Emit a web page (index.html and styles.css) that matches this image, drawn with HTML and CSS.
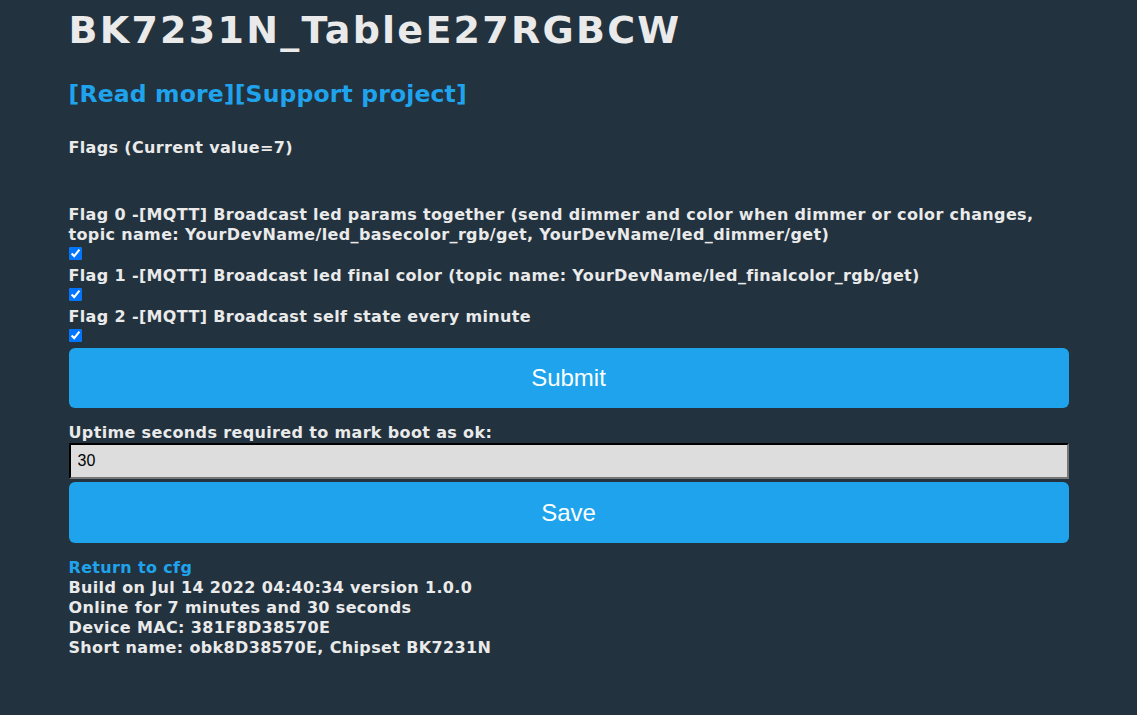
FILE: index.html
```html
<!DOCTYPE html>
<html lang="en">
<head>
  <meta charset="UTF-8">
  <title>BK7231N_TableE27RGBCW</title>
  <link rel="stylesheet" href="styles.css">
</head>
<body>
  <div class="page">
    <h1>BK7231N_TableE27RGBCW</h1>
    <h3 class="top-links"><a href="#">[Read more]</a><a href="#">[Support project]</a></h3>

    <form class="flags">
      <h4 class="flags-title">Flags (Current value=7)</h4>

      <label class="flag">Flag 0 -[MQTT] Broadcast led params together (send dimmer and color when dimmer or color changes, topic name: YourDevName/led_basecolor_rgb/get, YourDevName/led_dimmer/get)</label>
      <input type="checkbox" class="flag-check" checked>
      <label class="flag">Flag 1 -[MQTT] Broadcast led final color (topic name: YourDevName/led_finalcolor_rgb/get)</label>
      <input type="checkbox" class="flag-check" checked>
      <label class="flag">Flag 2 -[MQTT] Broadcast self state every minute</label>
      <input type="checkbox" class="flag-check" checked>

      <button type="button" class="btn">Submit</button>
    </form>

    <form class="uptime">
      <label class="uptime-label">Uptime seconds required to mark boot as ok:</label>
      <input type="text" class="field" value="30">
      <button type="button" class="btn btn-save">Save</button>
    </form>

    <div class="footer">
      <a href="#">Return to cfg</a>
      <div>Build on Jul 14 2022 04:40:34 version 1.0.0</div>
      <div>Online for 7 minutes and 30 seconds</div>
      <div>Device MAC: 381F8D38570E</div>
      <div>Short name: obk8D38570E, Chipset BK7231N</div>
    </div>
  </div>
</body>
</html>
```

FILE: styles.css
```css
/* Dark config page */
body, html {
  margin: 0;
  padding: 0;
  background: #22323f;
  color: #eaeaea;
  font-family: "DejaVu Sans", Verdana, sans-serif;
  font-size: 16px;
  font-weight: bold;
  letter-spacing: 0.35px; /* DejaVu runs a bit narrower than Verdana */
}

a {
  color: #1fa3ec;
  text-decoration: none;
}

.page {
  width: 1000px;
  margin: 0 auto;
}

h1 {
  margin: 6px 0 0;
  font-size: 38px;
  line-height: 48px;
  font-weight: bold;
  letter-spacing: 2.25px;
}

.top-links {
  margin: 25px 0 0;
  font-size: 23.5px;
  line-height: 30px;
  font-weight: bold;
  letter-spacing: 0.15px;
}

.flags-title {
  margin: 29px 0 47px;
  font-size: 16px;
  line-height: 20px;
}

.flag {
  display: block;
  line-height: 20px;
  font-size: 16px;
}

.flag-check {
  display: block;
  width: 13px;
  height: 13px;
  margin: 2px 0 6px;
  accent-color: #0075ff;
}

.btn {
  display: block;
  width: 100%;
  height: 60px;
  border: 0;
  border-radius: 6px;
  background: #1fa3ec;
  color: #faffff;
  font-family: "Liberation Sans", Arial, sans-serif;
  font-size: 24px;
  line-height: 60px;
  letter-spacing: 0;
  padding: 0;
}

.uptime {
  margin-top: 15px;
}

.uptime-label {
  display: block;
  line-height: 20px;
}

.field {
  display: block;
  box-sizing: border-box;
  width: 100%;
  height: 36px;
  margin: 0;
  padding: 0 7px;
  background: #dddddd;
  border: 2px inset #767676;
  border-top-color: #222;
  border-left-color: #222;
  color: #000;
  font-family: "Liberation Sans", Arial, sans-serif;
  font-size: 16px;
  letter-spacing: 0;
}

.btn-save {
  margin-top: 3px;
  height: 61px;
}

.footer {
  margin-top: 15px;
  line-height: 20px;
}

.footer a {
  display: block;
}
```
